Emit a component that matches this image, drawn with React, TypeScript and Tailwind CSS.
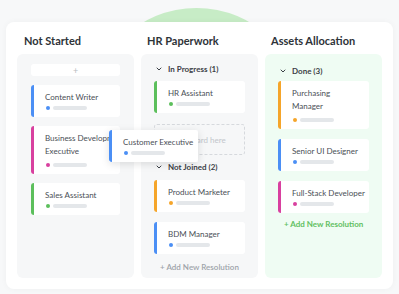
import { ChevronDown } from "lucide-react";

type Task = {
  title: string[];
  color: string;
};

const colors = {
  blue: "bg-[#4b8ff5]",
  pink: "bg-[#d8409f]",
  green: "bg-[#5cbf5c]",
  orange: "bg-[#f5a52a]",
};

function TaskCard({ title, color }: Task) {
  const multi = title.length > 1;
  return (
    <div className="flex rounded-[3px] bg-white">
      <div className={`w-[3px] shrink-0 rounded-l-[3px] ${color}`} />
      <div className="flex-1 pl-[11px] pr-2 pt-[6px] pb-[7px]">
        {title.map((line) => (
          <p
            key={line}
            className={`whitespace-nowrap text-[8px] text-[#4a4f56] ${multi ? "leading-[13px]" : "leading-[12px]"}`}
          >
            {line}
          </p>
        ))}
        <div className={`flex items-center gap-[3px] pl-[1px] ${multi ? "mt-[5px]" : "mt-[3px]"}`}>
          <span className={`h-[4px] w-[4px] rounded-full ${color}`} />
          <span className="h-[4px] w-[34px] rounded-full bg-[#e4e7ea]" />
        </div>
      </div>
    </div>
  );
}

function GroupHeader({ label }: { label: string }) {
  return (
    <div className="flex h-[10px] items-center gap-[5px] pl-[1px] text-[8px] font-bold text-[#3b4046]">
      <ChevronDown size={8} strokeWidth={3} />
      <span>{label}</span>
    </div>
  );
}

export default function App() {
  return (
    <div
      className="relative h-[294px] w-[399px] overflow-hidden bg-[#f7f8f9]"
      style={{ fontFamily: "Lato, 'Noto Sans', sans-serif" }}
    >
      <div className="absolute left-[90px] top-[8px] h-[213px] w-[213px] rounded-full bg-[#c7ecc6]" />

      <div className="relative mx-[6px] mt-[22px] h-[267px] rounded-lg bg-white px-[11px] pt-[12px] shadow-[0_0_6px_rgba(0,0,0,0.04)]">
        <div className="grid grid-cols-[117px_117px_117px] gap-[7px]">
          <h2 className="pl-[7px] text-[11px] font-bold leading-[14px] text-[#2e3338]">Not Started</h2>
          <h2 className="pl-[6px] text-[11px] font-bold leading-[14px] text-[#2e3338]">HR Paperwork</h2>
          <h2 className="pl-[6px] text-[11px] font-bold leading-[14px] text-[#2e3338]">Assets Allocation</h2>
        </div>

        <div className="mt-[6px] grid h-[224px] grid-cols-[117px_117px_117px] grid-rows-[224px] gap-[7px]">
          {/* Not Started */}
          <div className="flex flex-col gap-[9px] overflow-hidden rounded-md bg-[#f6f7f8] px-[14px] pt-[10px]">
            <div className="flex h-[12px] items-center justify-center rounded-[3px] bg-white text-[9px] leading-none text-[#b8bcc1]">
              +
            </div>
            <TaskCard title={["Content Writer"]} color={colors.blue} />
            <TaskCard title={["Business Development", "Executive"]} color={colors.pink} />
            <TaskCard title={["Sales Assistant"]} color={colors.green} />
          </div>

          {/* HR Paperwork */}
          <div className="flex flex-col rounded-md bg-[#f6f7f8] px-[13px] pt-[10px]">
            <GroupHeader label="In Progress (1)" />
            <div className="mt-[7px]">
              <TaskCard title={["HR Assistant"]} color={colors.green} />
            </div>
            <div className="mt-[11px] flex h-[31px] items-center justify-center rounded-[3px] border border-dashed border-[#d6d9dd] text-[8px] text-[#c2c6cb]">
              Drop card here
            </div>
            <div className="mt-[7px]">
              <GroupHeader label="Not Joined (2)" />
            </div>
            <div className="mt-[8px] flex flex-col gap-[10px]">
              <TaskCard title={["Product Marketer"]} color={colors.orange} />
              <TaskCard title={["BDM Manager"]} color={colors.blue} />
            </div>
            <p className="mt-[8px] whitespace-nowrap text-center text-[8px] font-semibold leading-[10px] text-[#9ea4aa]">
              + Add New Resolution
            </p>
          </div>

          {/* Assets Allocation */}
          <div className="flex flex-col rounded-md bg-[#effcf3] px-[13px] pt-[12px]">
            <GroupHeader label="Done (3)" />
            <div className="mt-[5px] flex flex-col gap-[10px]">
              <TaskCard title={["Purchasing", "Manager"]} color={colors.orange} />
              <TaskCard title={["Senior UI Designer"]} color={colors.blue} />
              <TaskCard title={["Full-Stack Developer"]} color={colors.pink} />
            </div>
            <p className="mt-[6px] whitespace-nowrap pl-[6px] text-[8px] font-bold leading-[10px] text-[#62c062]">
              + Add New Resolution
            </p>
          </div>
        </div>

        {/* card being dragged */}
        <div className="absolute left-[103px] top-[108px] w-[89px] shadow-[0_2px_8px_rgba(0,0,0,0.12)]">
          <TaskCard title={["Customer Executive"]} color={colors.blue} />
        </div>
      </div>
    </div>
  );
}
